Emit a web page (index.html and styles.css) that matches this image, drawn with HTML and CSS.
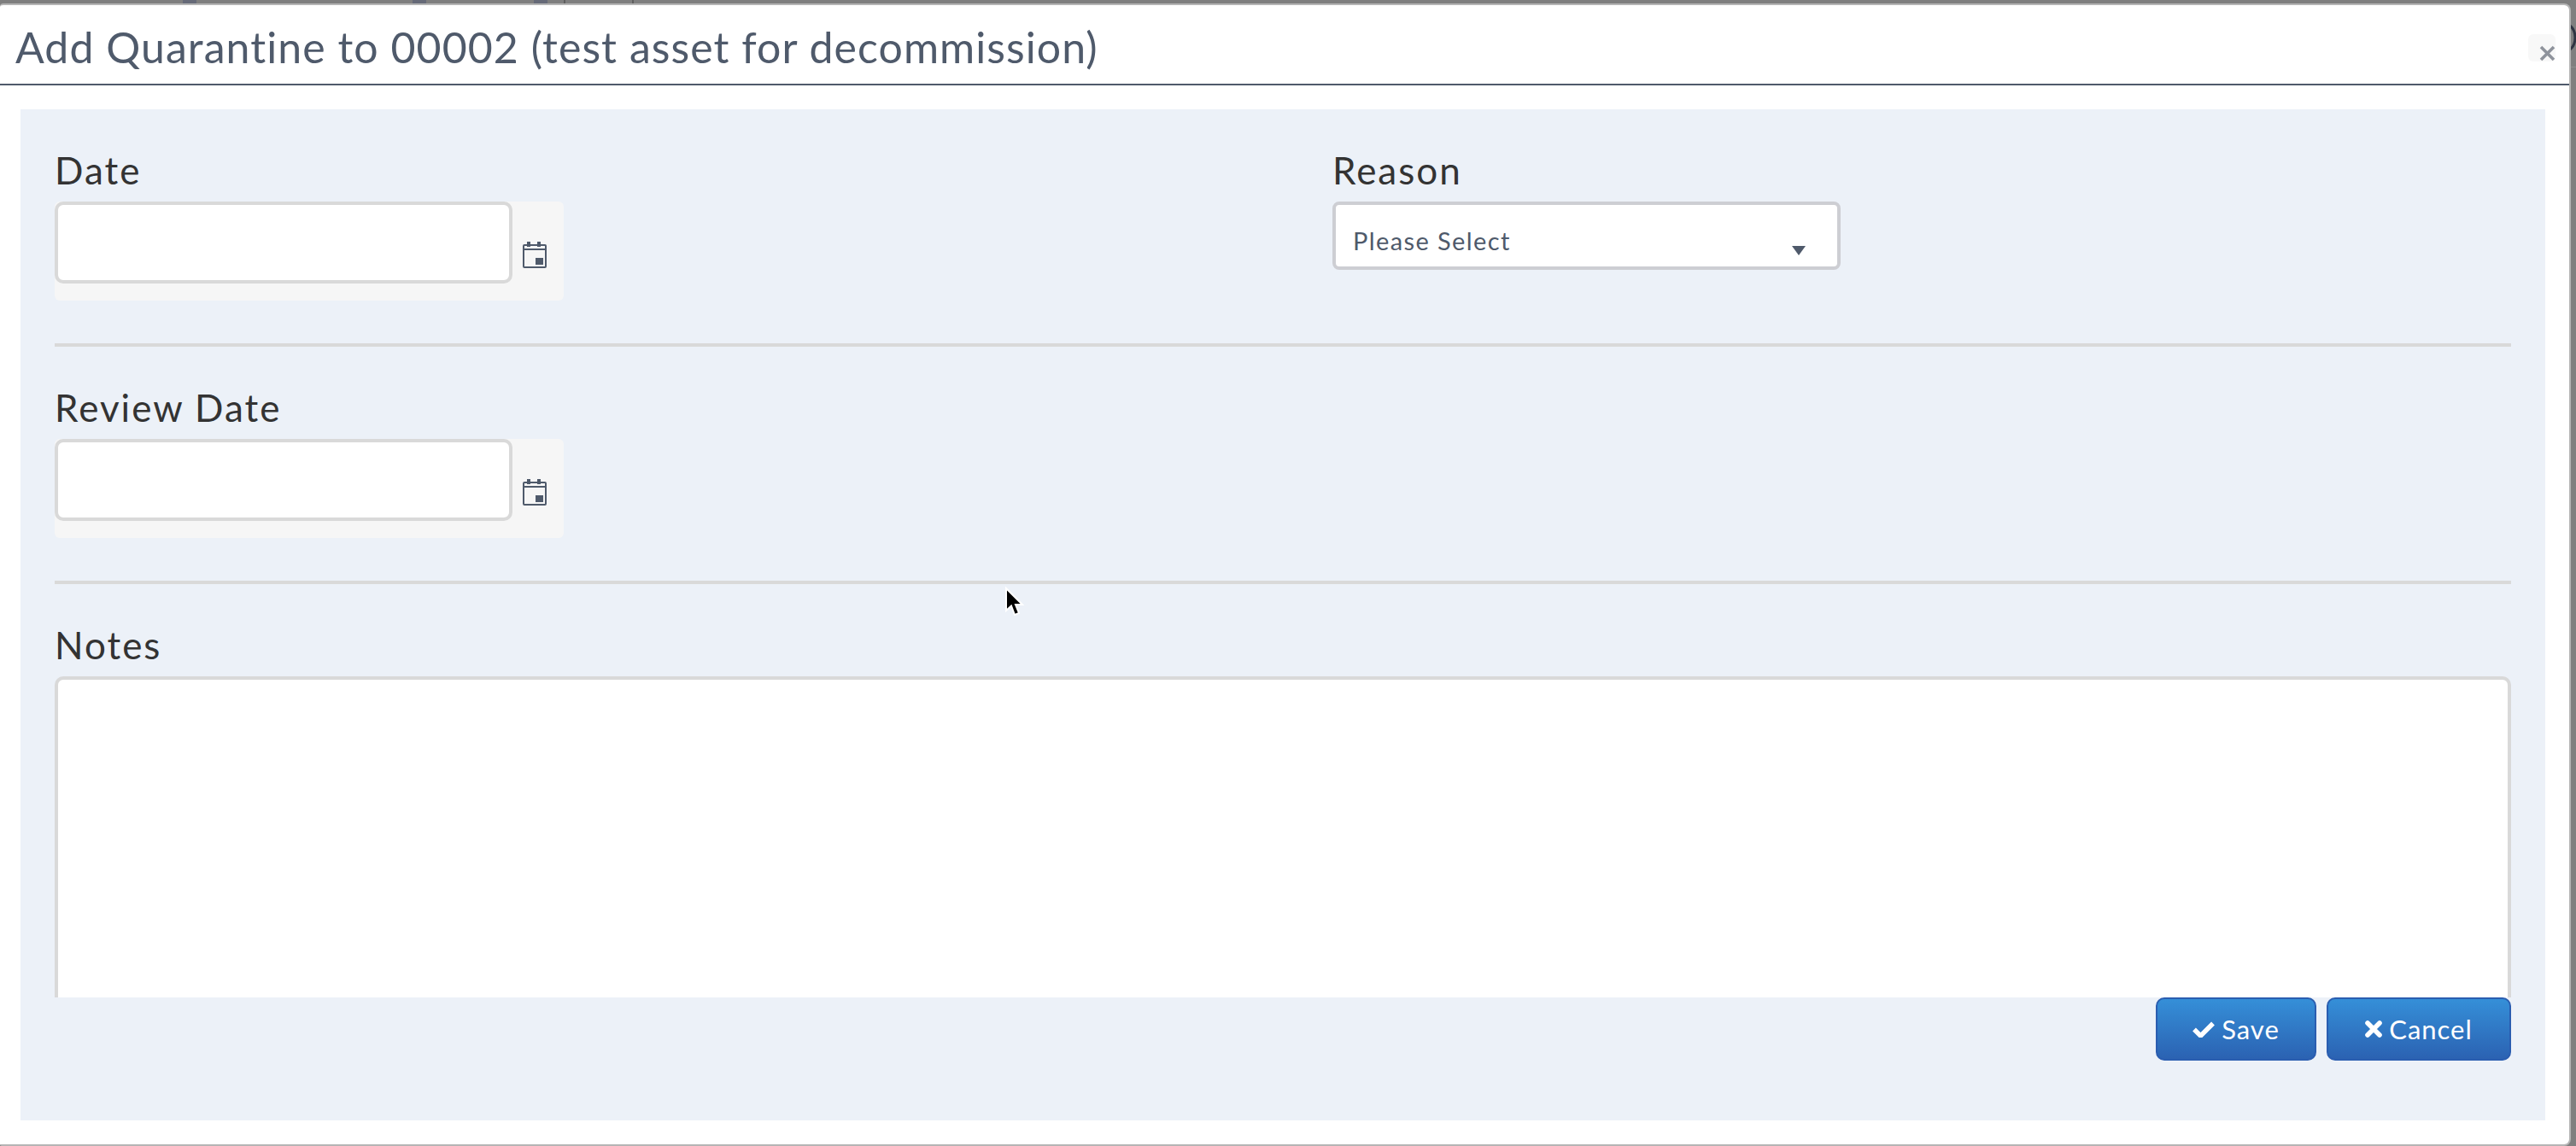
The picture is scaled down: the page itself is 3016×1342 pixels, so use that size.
FILE: index.html
```html
<!DOCTYPE html>
<html lang="en">
<head>
  <meta charset="UTF-8">
  <title>Add Quarantine</title>
  <link rel="stylesheet" href="styles.css">
</head>
<body>

<!-- page behind the dialog -->
<div class="backdrop">
  <span class="backdrop-cell cell-a"></span>
  <span class="backdrop-cell cell-b"></span>
  <span class="backdrop-cell cell-c"></span>
  <span class="backdrop-line line-a"></span>
  <span class="backdrop-line line-b"></span>
</div>
<span class="backdrop-rule"></span>
<svg class="backdrop-arc" width="7" height="30" viewBox="0 0 7 30"><path d="M0 1Q6 6 6 15T0 29" stroke="#2e3442" stroke-width="3" fill="none"/></svg>

<div class="modal">
  <div class="modal-header">
    <h3 class="modal-title">Add Quarantine to 00002 (test asset for decommission)</h3>
    <button class="modal-close">
      <svg width="19" height="19" viewBox="0 0 19 19"><path d="M2 2 17 17M17 2 2 17" stroke="#8f939c" stroke-width="3.6" fill="none"/></svg>
    </button>
  </div>

  <div class="modal-body">
    <div class="form-row">
      <div class="field">
        <label class="field-label">Date</label>
        <div class="date-wrap">
          <input type="text" class="date-input">
          <span class="date-icon">
            <svg width="28" height="31" viewBox="0 0 28 31"><path d="M2 4H26Q27 4 27 5V29Q27 30 26 30H2Q1 30 1 29V5Q1 4 2 4ZM1 9H27" stroke="#4f5a6b" stroke-width="2" fill="none"/><path d="M5 0h4v6H5zM17 0h4v6h-4zM15 19h9v8h-9z" fill="#4f5a6b"/></svg>
          </span>
        </div>
      </div>
      <div class="field">
        <label class="field-label">Reason</label>
        <div class="select-box">
          <span class="select-text">Please Select</span>
          <span class="select-arrow"></span>
        </div>
      </div>
    </div>
    <hr class="divider">

    <div class="form-row">
      <div class="field">
        <label class="field-label">Review Date</label>
        <div class="date-wrap">
          <input type="text" class="date-input">
          <span class="date-icon">
            <svg width="28" height="31" viewBox="0 0 28 31"><path d="M2 4H26Q27 4 27 5V29Q27 30 26 30H2Q1 30 1 29V5Q1 4 2 4ZM1 9H27" stroke="#4f5a6b" stroke-width="2" fill="none"/><path d="M5 0h4v6H5zM17 0h4v6h-4zM15 19h9v8h-9z" fill="#4f5a6b"/></svg>
          </span>
        </div>
      </div>
    </div>
    <hr class="divider">

    <label class="field-label notes-label">Notes</label>
    <div class="notes-clip"><textarea class="notes"></textarea></div>

    <div class="actions">
      <button class="btn">
        <svg width="26" height="20" viewBox="0 0 26 20"><path d="M2 10.500 9.500 18 24 3.500" stroke="#fff" stroke-width="5.400" fill="none"/></svg>
        Save
      </button>
      <button class="btn btn-cancel">
        <svg width="20" height="20" viewBox="0 0 20 20"><path d="M3 3 17 17M17 3 3 17" stroke="#fff" stroke-width="5.600" stroke-linecap="round" fill="none"/></svg>
        Cancel
      </button>
    </div>
  </div>
</div>

<!-- mouse pointer caught in the screenshot -->
<svg class="cursor" width="24" height="37" viewBox="0 0 24 37"><path d="M2 2V28L8 22.500 12 33 17 31 13 21H21Z" fill="#000" stroke="#fff" stroke-width="2"/></svg>

</body>
</html>
```

FILE: styles.css
```css
html, body {
  margin: 0;
  height: 100%;
}
body {
  position: relative;
  width: 3016px;
  height: 1342px;
  overflow: hidden;
  background: #7f7f7f;
  font-family: "Lato", "Liberation Sans", sans-serif;
}
.backdrop {
  position: absolute;
  top: 0;
  left: 0;
  right: 0;
  height: 4px;
}
.backdrop-cell {
  position: absolute;
  top: 0;
  width: 16px;
  height: 4px;
  background: #666a78;
}
.cell-a { left: 214px; }
.cell-b { left: 483px; }
.cell-c { left: 625px; }
.backdrop-line {
  position: absolute;
  top: 0;
  width: 2px;
  height: 4px;
  background: #5f5f5f;
}
.line-a { left: 660px; }
.line-b { left: 740px; }
.backdrop-rule {
  position: absolute;
  top: 78px;
  left: 3010px;
  right: 0;
  height: 1px;
  background: #8f8f8f;
}
.backdrop-arc {
  position: absolute;
  top: 29px;
  left: 3009px;
}
.modal {
  position: absolute;
  top: 4px;
  left: 0;
  width: 3010px;
  height: 1338px;
  background: #fff;
  border-top: 2px solid #b5b5b5;
  border-right: 2px solid #b5b5b5;
  border-bottom: 2px solid #b5b5b5;
  border-radius: 4px 8px 8px 2px;
  box-sizing: border-box;
}
.modal-header {
  height: 94px;
  box-sizing: border-box;
  border-bottom: 2px solid #4f5a6b;
  display: flex;
  justify-content: space-between;
  padding-left: 18px;
}
.modal-title {
  margin: 0;
  font-size: 50px;
  font-weight: 400;
  line-height: 60px;
  padding-top: 19px;
  color: #4f5a6b;
  letter-spacing: 1.05px;
}
.modal-close {
  width: 32px;
  height: 32px;
  margin: 34px 16px 0 0;
  padding: 12px 0 0 13px;
  background: #f8f8f8;
  border: none;
  border-radius: 6px;
  box-sizing: border-box;
  line-height: 0;
}
.modal-body {
  margin: 28px 28px 0 24px;
  height: 1184px;
  box-sizing: border-box;
  background: #ecf1f8;
  padding: 0 40px;
}
.form-row {
  display: flex;
  gap: 960px;
  padding-top: 50px;
}
.field {
  width: 536px;
}
.field-label {
  display: block;
  height: 58px;
  font-size: 44px;
  line-height: 42px;
  letter-spacing: 2px;
  color: #333;
}
.date-wrap {
  width: 596px;
  height: 116px;
  display: flex;
  background: #f6f6f6;
  border-radius: 6px;
}
.date-input {
  width: 536px;
  height: 96px;
  box-sizing: border-box;
  border: 4px solid #d9d9d9;
  border-radius: 10px;
  background: #fff;
  padding: 0;
  margin: 0;
  outline: none;
}
.date-icon {
  padding: 47px 0 0 12px;
}
.select-box {
  width: 595px;
  height: 80px;
  box-sizing: border-box;
  border: 4px solid #cdced3;
  border-radius: 8px;
  background: #fff;
  display: flex;
  justify-content: space-between;
  padding: 24px 37px 0 20px;
}
.select-text {
  font-size: 29px;
  line-height: 36px;
  letter-spacing: 1.4px;
  color: #4f5a6b;
}
.select-arrow {
  width: 0;
  height: 0;
  margin-top: 24px;
  border-left: 8px solid transparent;
  border-right: 8px solid transparent;
  border-top: 11px solid #4f5a6b;
}
.divider {
  margin: 50px 0 0;
  height: 4px;
  border: none;
  background: #d9d9d9;
}
.notes-label {
  margin-top: 50px;
}
.notes-clip {
  height: 376px;
  overflow: hidden;
}
.notes {
  display: block;
  width: 100%;
  height: 420px;
  box-sizing: border-box;
  border: 4px solid #d9d9d9;
  border-radius: 10px;
  background: #fff;
  margin: 0;
  padding: 0;
  resize: none;
  outline: none;
}
.actions {
  display: flex;
  justify-content: flex-end;
  gap: 12px;
}
.btn {
  width: 188px;
  height: 74px;
  box-sizing: border-box;
  border: 2px solid #2a5db0;
  border-radius: 10px;
  background: linear-gradient(to bottom, #358fd8, #2b62b2);
  color: #fff;
  font-family: inherit;
  font-size: 31px;
  letter-spacing: 1px;
  display: flex;
  align-items: center;
  justify-content: center;
  gap: 8px;
  padding: 0;
}
.btn-cancel {
  width: 216px;
}
.cursor {
  position: absolute;
  left: 1176px;
  top: 687px;
}
```
